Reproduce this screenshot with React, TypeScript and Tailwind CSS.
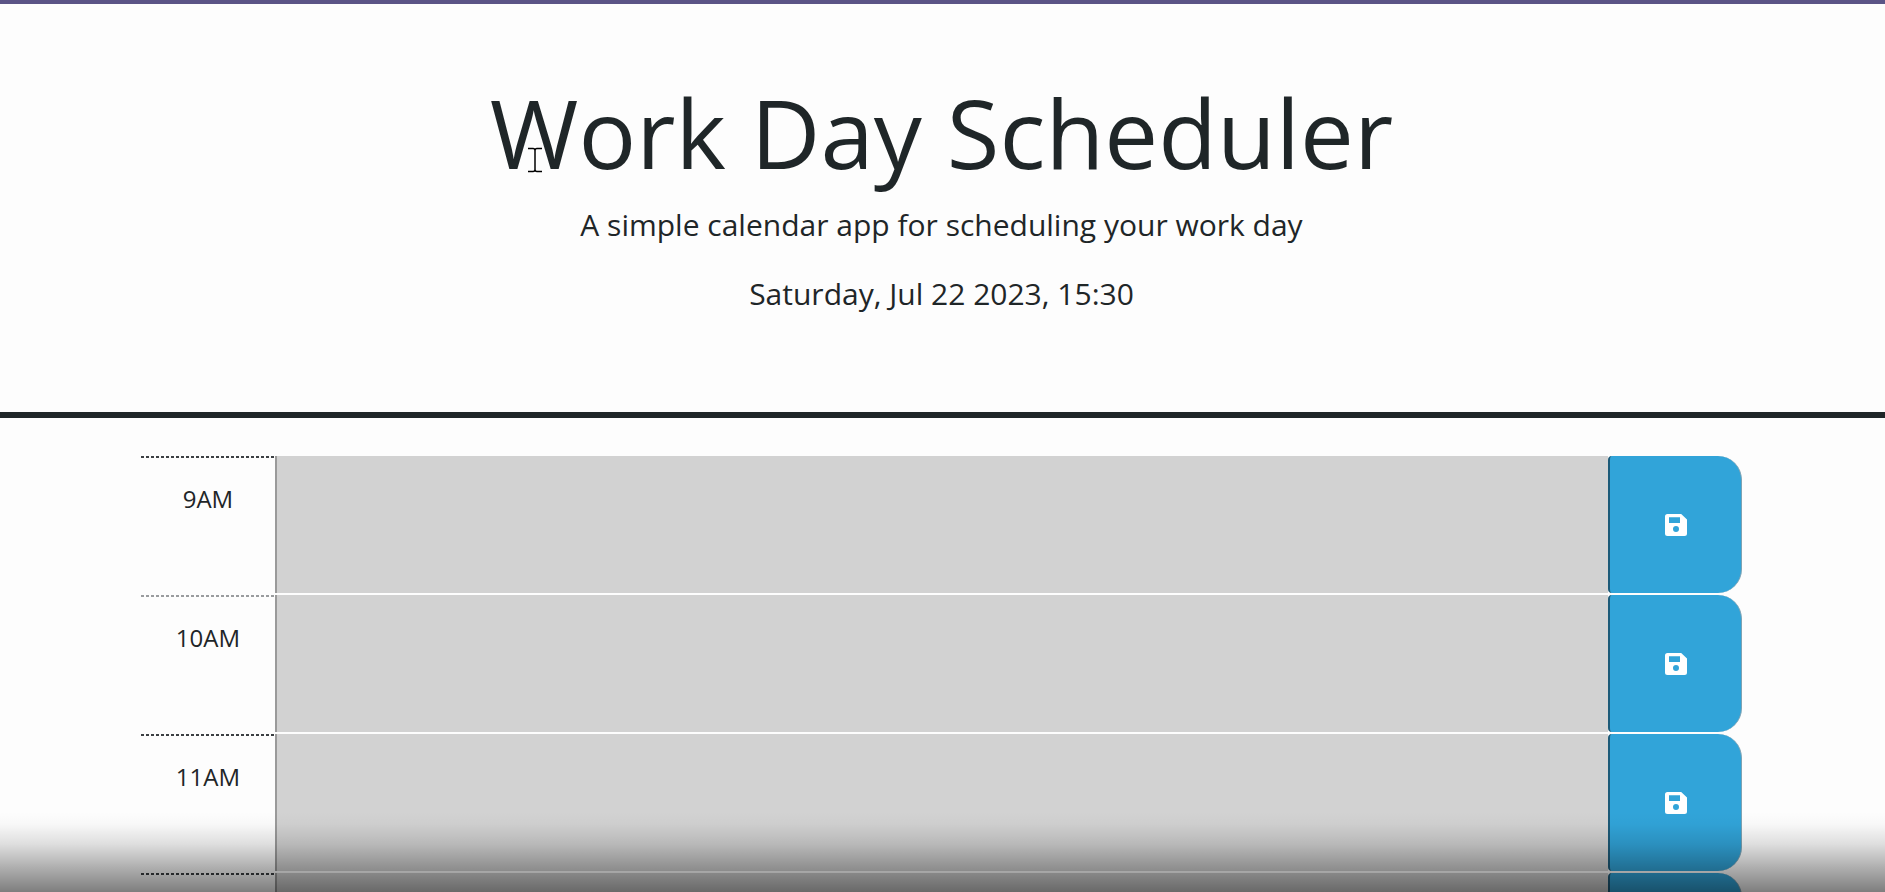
import { useState } from "react";

type Block = { id: string; name: string; label?: string; soft?: boolean };

const blocks: Block[] = [
  { id: "hour-9", name: "9AM", label: "9AM" },
  { id: "hour-10", name: "10AM", label: "10AM", soft: true },
  { id: "hour-11", name: "11AM", label: "11AM" },
  { id: "hour-12", name: "12PM" },
];

function SaveIcon() {
  return (
    <svg viewBox="0 0 22 22" className="size-[22px]" aria-hidden="true">
      <path
        fill="#fff"
        fillRule="evenodd"
        d="M2.5 0H16.2L22 5.5V19.5A2.5 2.5 0 0 1 19.5 22H2.5A2.5 2.5 0 0 1 0 19.5V2.5A2.5 2.5 0 0 1 2.5 0ZM4 3.3V8.9H15V3.3ZM11 12.1A3 3 0 1 0 11 18.1A3 3 0 1 0 11 12.1Z"
      />
    </svg>
  );
}

function TimeBlock({ block }: { block: Block }) {
  const [text, setText] = useState("");
  const dots = block.soft
    ? "bg-[repeating-linear-gradient(90deg,#9a9c9e_0_3px,transparent_3px_5px)]"
    : "bg-[repeating-linear-gradient(90deg,#3c4043_0_3px,transparent_3px_5px)]";
  return (
    <div className="grid h-[139px] grid-cols-12">
      <label
        htmlFor={block.id}
        className={`${dots} bg-[length:100%_2px] bg-no-repeat pt-[25px] text-center text-2xl leading-9`}
      >
        {block.label}
      </label>
      <textarea
        id={block.id}
        aria-label={block.name}
        value={text}
        onChange={(e) => setText(e.target.value)}
        className="col-span-10 mb-[2px] resize-none border-l-2 border-[#9a9a9a] bg-[#d2d2d2] p-2 text-2xl outline-none"
      />
      <button
        type="button"
        aria-label={`Save ${block.name}`}
        className="mb-[2px] flex items-center justify-center rounded-l-[4px] rounded-r-[24px] border-r border-l-2 border-r-[#7fa3b3] border-l-[#1c5a78] bg-[#31a4d9]"
      >
        <SaveIcon />
      </button>
    </div>
  );
}

const CURSOR = "M1 1.5H6Q8 1.5 8 3.5Q8 1.5 10 1.5H15M8 3V23M1 24.5H6Q8 24.5 8 22.5Q8 24.5 10 24.5H15";

export default function App() {
  return (
    <div className="relative h-screen overflow-hidden bg-[#fdfdfd] font-['Open_Sans',sans-serif] text-[#1f2628]">
      <header className="border-t-4 border-b-6 border-t-[#5b5486] border-b-[#1f2628] pt-[70px] pr-0.5 pb-24 text-center">
        <h1 className="relative mx-auto w-fit text-8xl leading-[116px]">
          Work Day Scheduler
          <svg
            viewBox="0 0 16 26"
            className="absolute top-[73px] left-[37px] h-[26px] w-4"
            fill="none"
            aria-hidden="true"
          >
            <path d={CURSOR} stroke="#fff" strokeWidth="3" />
            <path d={CURSOR} stroke="#000" strokeWidth="1.5" />
          </svg>
        </h1>
        <p className="mt-3 text-[30px] leading-[45px]">A simple calendar app for scheduling your work day</p>
        <p className="mt-6 text-[30px] leading-[45px]">Saturday, Jul 22 2023, 15:30</p>
      </header>
      <main className="pt-[38px] pr-0.5">
        <div className="mx-auto w-[85%]">
          {blocks.map((block) => (
            <TimeBlock key={block.id} block={block} />
          ))}
        </div>
      </main>
      <div className="pointer-events-none absolute inset-x-0 bottom-0 h-20 bg-[linear-gradient(to_top,rgba(0,0,0,0.5)_0%,rgba(0,0,0,0.3)_32%,rgba(0,0,0,0.12)_60%,rgba(0,0,0,0.02)_85%,transparent_100%)]" />
    </div>
  );
}
